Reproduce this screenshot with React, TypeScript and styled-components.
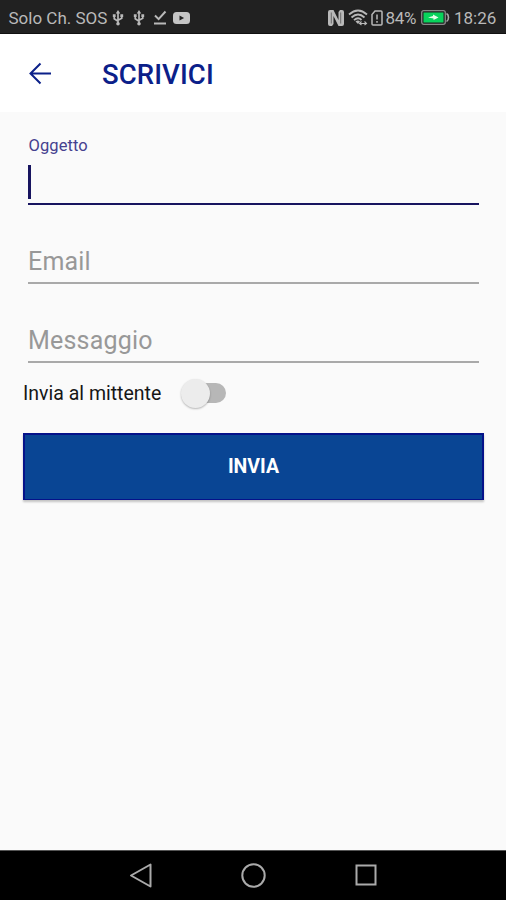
import React from 'react';
import styled, { createGlobalStyle } from 'styled-components';

const GlobalStyle = createGlobalStyle`
  * { box-sizing: border-box; }
  body { margin: 0; background: #fafafa; font-family: Roboto, sans-serif; }
  button, input { font-family: inherit; }
`;

const Screen = styled.div`
  display: flex;
  flex-direction: column;
  width: 506px;
  height: 900px;
  background: #fafafa;
  overflow: hidden;
`;

const StatusBar = styled.div`
  display: flex;
  align-items: center;
  height: 34px;
  padding: 2px 9px 0 8.5px;
  background: #212121;
  border-bottom: 1px solid #111;
  color: #b9b9b9;
  white-space: nowrap;
`;

const StatusText = styled.span<{ $width: number; $gap?: number; $spacing?: number }>`
  flex: none;
  width: ${(p) => p.$width}px;
  margin-left: ${(p) => p.$gap ?? 0}px;
  font-size: 17px;
  letter-spacing: ${(p) => p.$spacing ?? 0}px;
  line-height: 20px;
`;

const StatusIcon = styled.svg<{ $gap?: number }>`
  flex: none;
  display: block;
  margin-left: ${(p) => p.$gap ?? 0}px;
  overflow: visible;
`;

const Spacer = styled.div`
  flex: 1;
`;

const Header = styled.header`
  display: flex;
  align-items: center;
  height: 78px;
  padding: 2px 0 0 28px;
  background: #fff;
  color: #0b2089;
`;

const BackButton = styled.button`
  display: flex;
  width: 24px;
  height: 24px;
  padding: 0;
  border: 0;
  background: none;
  color: inherit;
`;

const Title = styled.h1`
  margin: 0 0 0 50px;
  padding-top: 2px;
  font-size: 27.5px;
  font-weight: 500;
  line-height: 32px;
  letter-spacing: 0.1px;
`;

const Form = styled.form`
  display: flex;
  flex: 1;
  flex-direction: column;
  padding: 22px 22px 0 23px;
`;

const Field = styled.div<{ $active?: boolean }>`
  display: flex;
  flex-direction: column;
  justify-content: flex-end;
  height: ${(p) => (p.$active ? 71 : 79)}px;
  margin: 0 5px;
  padding-bottom: ${(p) => (p.$active ? 4 : 6)}px;
  border-bottom: 2px solid ${(p) => (p.$active ? '#17145f' : '#a9a9a9')};
`;

const FloatingLabel = styled.label`
  margin: 0 0 8px 0.5px;
  color: #45418f;
  font-size: 16.5px;
  line-height: 22px;
  letter-spacing: 0.1px;
`;

const Caret = styled.span`
  width: 3px;
  height: 34px;
  background: #17145f;
`;

const Placeholder = styled.label`
  color: #989898;
  font-size: 25px;
  line-height: 28px;
  letter-spacing: 0.2px;
`;

const SwitchRow = styled.div`
  display: flex;
  align-items: center;
  height: 60px;
  color: #161616;
`;

const SwitchLabel = styled.span`
  width: 157px;
  padding-top: 1px;
  font-size: 19.5px;
  line-height: 24px;
`;

const SwitchTrack = styled.span`
  display: flex;
  align-items: center;
  width: 40px;
  height: 20px;
  margin-left: 6px;
  border-radius: 10px;
  background: #b7b7b7;
`;

const SwitchThumb = styled.span`
  width: 29px;
  height: 29px;
  margin-left: -5px;
  border-radius: 50%;
  background: #ececec;
  box-shadow: 0 1px 2px rgba(0, 0, 0, 0.28);
`;

const SubmitButton = styled.button`
  width: 461px;
  height: 67px;
  margin-top: 9.5px;
  padding: 0 0 1px;
  border: solid #05128a;
  border-width: 2px 2px 1px;
  background: #094594;
  box-shadow: 0 2px 2px rgba(0, 0, 0, 0.22);
  color: #fff;
  font-size: 19.5px;
  font-weight: 700;
`;

const NavBar = styled.nav`
  display: flex;
  height: 50px;
  padding: 12px 127px 0 128px;
  justify-content: space-between;
  border-top: 1px solid #555;
  background: #000;
`;

const NavIcon = styled.svg`
  width: 26px;
  height: 26px;
  fill: none;
  stroke: #aaa;
  stroke-width: 2;
  stroke-linejoin: round;
`;

const UsbIcon = ({ gap }: { gap: number }) => (
  <StatusIcon $gap={gap} width="12" height="16" viewBox="0 0 12 17" fill="none" stroke="#b9b9b9" strokeWidth="1.8">
    <path d="M6 3v12M2 6v3.3L6 12M10 6v2.7L6 11" />
    <path d="M6 0l2.4 3.8H3.6zM.5 4.5h3v3h-3zM8.5 4.5h3v3h-3z" fill="#b9b9b9" stroke="none" />
    <circle cx="6" cy="14.6" r="1.9" fill="#b9b9b9" stroke="none" />
  </StatusIcon>
);

export default function App() {
  return (
    <Screen>
      <GlobalStyle />
      <StatusBar>
        <StatusText $width={100}>Solo Ch. SOS</StatusText>
        <UsbIcon gap={3.5} />
        <UsbIcon gap={9} />
        <StatusIcon $gap={9} width="12" height="15" viewBox="0 0 12 15" fill="none" stroke="#b9b9b9" strokeWidth="2">
          <path d="M1 5.5l3.6 3.6L11.500 1.500M0 13.500h12" />
        </StatusIcon>
        <StatusIcon $gap={7} width="17" height="12" viewBox="0 0 17 12">
          <rect width="17" height="12" rx="3.5" fill="#c4c4c4" />
          <path d="M6.500 3.400v5.200l4.600-2.600z" fill="#212121" />
        </StatusIcon>
        <Spacer />
        <StatusIcon width="16" height="16" viewBox="0 0 16 16">
          <path d="M2 0H5.500L10.500 10V2L12 0H14Q16 0 16 2V14Q16 16 14 16H10.500L5.500 6V14L4 16H2Q0 16 0 14V2Q0 0 2 0Z" fill="#b9b9b9" />
          <path d="M3.300 2.500V13.500M12.700 2.500V13.500" stroke="#555" strokeWidth=".8" />
        </StatusIcon>
        <StatusIcon $gap={4} width="20" height="17" viewBox="0 0 20 17" fill="none" stroke="#b9b9b9" strokeWidth="1.8">
          <path d="M1 5.500Q10-2.500 19 5.500M3.500 8.500Q10 2.500 16.500 8.500M6 11.200Q10 7.500 13.500 11" />
          <path d="M7.500 12.500Q10 10.500 12 12.500L10 15z" fill="#b9b9b9" stroke="none" />
          <path d="M12 14.500h6.500M13.500 12.500l-2 2 2 1.500M16.500 12.500l2 2-2 1.500" strokeWidth="1.1" />
        </StatusIcon>
        <StatusIcon $gap={3} width="12" height="16" viewBox="0 0 12 16" fill="none" stroke="#b9b9b9" strokeWidth="1.5">
          <path d="M4 1h6q1 0 1 1v12q0 1-1 1H2q-1 0-1-1V4.500zM6 4.500v5M6 11v1.800" />
        </StatusIcon>
        <StatusText $width={35} $gap={2.5} $spacing={-0.3}>84%</StatusText>
        <StatusIcon width="28" height="15" viewBox="0 0 28 15">
          <rect x=".7" y=".7" width="23.600" height="13.600" rx="2" fill="#212121" stroke="#888" strokeWidth="1.3" />
          <rect x="2.500" y="2.500" width="20" height="10" fill="#08d35c" />
          <path d="M7 7.500l5-1.500V4.500l5.500 3-5 2.500V8.500z" fill="#e4ffe9" />
          <path d="M25.500 3.500q2 1 2 4t-2 4" fill="none" stroke="#aaa" strokeWidth="1.600" />
        </StatusIcon>
        <StatusText $width={43} $gap={5.5}>18:26</StatusText>
      </StatusBar>
      <Header>
        <BackButton aria-label="Indietro">
          <svg width="24" height="24" viewBox="0 0 24 24" fill="none" stroke="currentColor" strokeWidth="2">
            <path d="M23 11.500H2M12.500 1.500l-10 10 10 10" />
          </svg>
        </BackButton>
        <Title>SCRIVICI</Title>
      </Header>
      <Form>
        <Field $active>
          <FloatingLabel>Oggetto</FloatingLabel>
          <Caret />
        </Field>
        <Field>
          <Placeholder>Email</Placeholder>
        </Field>
        <Field>
          <Placeholder>Messaggio</Placeholder>
        </Field>
        <SwitchRow>
          <SwitchLabel>Invia al mittente</SwitchLabel>
          <SwitchTrack role="switch" aria-checked={false}>
            <SwitchThumb />
          </SwitchTrack>
        </SwitchRow>
        <SubmitButton type="button">INVIA</SubmitButton>
      </Form>
      <NavBar>
        <NavIcon viewBox="0 0 26 26">
          <path d="M3 12.500L22.500 1.500v22z" />
        </NavIcon>
        <NavIcon viewBox="0 0 26 26">
          <circle cx="12.500" cy="12.500" r="11.200" />
        </NavIcon>
        <NavIcon viewBox="0 0 26 26">
          <path d="M3.500 2.500h19v19h-19z" strokeLinejoin="miter" />
        </NavIcon>
      </NavBar>
    </Screen>
  );
}
